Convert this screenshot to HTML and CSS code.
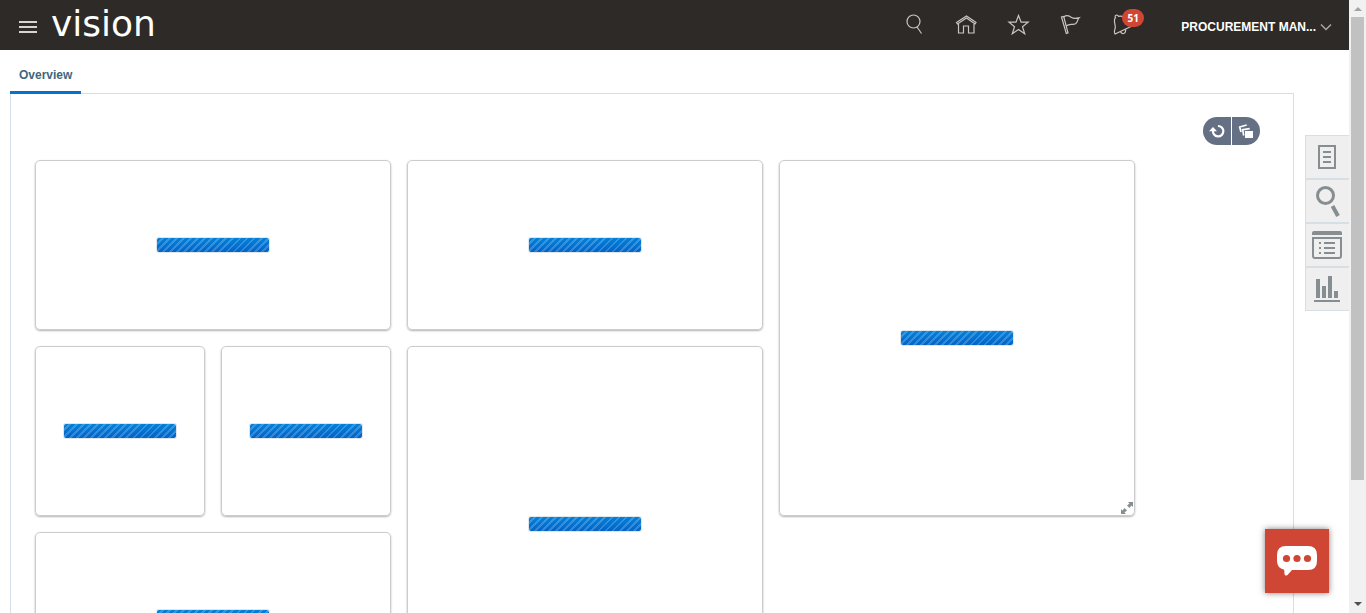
FILE: index.html
```html
<!DOCTYPE html>
<html lang="en">
<head>
<meta charset="utf-8">
<title>Overview</title>
<link rel="stylesheet" href="styles.css">
</head>
<body class="window">
<div class="page">
  <header class="header">
    <button class="menu-button" aria-label="Navigator"><svg width="20" height="14" viewBox="0 0 20 14" fill="#d8d5cf"><path d="M1 1h18v2H1zM1 6h18v2H1zM1 11h18v2H1z"/></svg></button>
    <a class="brand" href="#">vision</a>
    <nav class="header-icons" aria-label="Global">
      <button class="header-icon" aria-label="Search"><svg width="24" height="24" viewBox="0 0 24 24"><circle cx="11.500" cy="9.500" r="6.500"/><path d="M15 15l4.500 6.500"/></svg></button>
      <button class="header-icon" aria-label="Home"><svg width="24" height="24" viewBox="0 0 24 24"><path d="M2.500 10.500L12.500 4l9.500 6.500-1 1.500-8.500-6-9 6z"/><path d="M4.500 12v9h5v-7h5v7h5.500v-9"/></svg></button>
      <button class="header-icon" aria-label="Favorites"><svg width="24" height="24" viewBox="0 0 24 24"><path d="M12.500 3.500l2.600 6.700h7l-5.600 4.500 2.200 7-6.200-4.300-6.200 4.300 2.200-7L3 10.200h7z"/></svg></button>
      <button class="header-icon" aria-label="Watchlist"><svg width="24" height="24" viewBox="0 0 24 24"><path d="M3.500 5l4.800 16.500 1.700-.6L5.700 4.500z"/><path d="M5.700 5C9 2.500 11 3.500 13.500 5.500c2.500 1.500 4.500 1 7.500.3-1.500 1.500-1 4.200-3.500 6-3 1.500-5.500-1-9.500 2.200"/></svg></button>
      <button class="header-icon" aria-label="Notifications, 51 new"><svg width="24" height="24" viewBox="0 0 24 24"><path d="M5.500 5.500C4 3.500 7.300 2 8.500 4.300c4-.8 7 2 8.300 5.400 1 2.400 2 3.400 4.200 4.800l-16 7.500c-2-2 .3-4 .3-7S3 8 5.500 5.500z"/><path d="M10.500 19.500c1 3.500 6 2.500 5-2.300"/></svg><span class="badge">51</span></button>
    </nav>
    <button class="user-button">PROCUREMENT MAN...<svg width="12" height="8" viewBox="0 0 12 8"><path d="M1 1.500l5 5 5-5"/></svg></button>
  </header>

  <nav class="tabs" aria-label="Dashboards"><a class="tab" href="#">Overview</a></nav>

  <div class="body-row">
    <main class="panel">
      <div class="toolbar">
        <button class="tool" aria-label="Refresh"><svg width="16" height="16" viewBox="0 0 16 16"><path d="M4 7.500a5.200 5.200 0 1 0 5-4.500" fill="none" stroke="#fff" stroke-width="2.200"/><path d="M0 8.300L4 4l4 4.300z" fill="#fff"/></svg></button>
        <button class="tool" aria-label="Copy"><svg width="16" height="16" viewBox="0 0 16 16"><path d="M7 8h8v7H7z" fill="#fff"/><path d="M5.700 12.500L4.700 6.700l7-1M3 9L1.700 4l7-2" fill="none" stroke="#fff" stroke-width="1.700"/></svg></button>
      </div>
      <section class="tiles" aria-label="Infotiles">
        <article class="tile wide"><div class="loading" role="progressbar" aria-label="Loading"></div></article>
        <article class="tile wide"><div class="loading" role="progressbar" aria-label="Loading"></div></article>
        <article class="tile wide tall"><div class="loading" role="progressbar" aria-label="Loading"></div>
          <button class="expand" aria-label="Expand"><svg width="12" height="12" viewBox="0 0 12 12" fill="#878e92"><path d="M7 0h5v5l-1.500-1.500L8.500 6 6 3.500l2.500-2zM0 7l1.500 1.500L3.500 6 6 8.500l-2.500 2L5 12H0z"/></svg></button></article>
        <article class="tile"><div class="loading" role="progressbar" aria-label="Loading"></div></article>
        <article class="tile"><div class="loading" role="progressbar" aria-label="Loading"></div></article>
        <article class="tile wide tall"><div class="loading" role="progressbar" aria-label="Loading"></div></article>
        <article class="tile wide"><div class="loading" role="progressbar" aria-label="Loading"></div></article>
      </section>
    </main>
    <aside class="side-tabs" aria-label="Panels">
      <button class="side-tab" aria-label="Tasks"><svg width="32" height="32" viewBox="0 0 32 32"><path d="M8 5h16v22H8z" fill="none" stroke="#878e92" stroke-width="2"/><path d="M12 10h8v2h-8zM12 15h8v2h-8zM12 20h8v2h-8z"/></svg></button>
      <button class="side-tab" aria-label="Search"><svg width="32" height="32" viewBox="0 0 32 32"><circle cx="14.500" cy="10.500" r="8" fill="none" stroke="#878e92" stroke-width="3"/><path d="M21.500 21l5.500 10" stroke="#878e92" stroke-width="4"/></svg></button>
      <button class="side-tab" aria-label="Lists"><svg width="32" height="32" viewBox="0 0 32 32"><path d="M1 4q0-2 2-2h26q2 0 2 2v2H1z"/><path d="M2 9h28v18q0 2-2 2H4q-2 0-2-2z" fill="none" stroke="#878e92" stroke-width="2"/><path d="M8 13h2v2H8zM8 18h2v2H8zM8 23h2v2H8zM13 13h11v2H13zM13 18h11v2H13zM13 23h11v2H13z"/></svg></button>
      <button class="side-tab" aria-label="Reports"><svg width="32" height="32" viewBox="0 0 32 32"><path d="M5 6h4v19H5zM11 13h4v12h-4zM17 3h4v22h-4zM23 18h4v7h-4zM3 27h26v2H3z"/></svg></button>
    </aside>
  </div>
  <button class="chat" aria-label="Chat"><svg width="42" height="32" viewBox="0 0 42 32"><path d="M10 1h22q9 0 9 9v6q0 9-9 9H16l-4.500 5Q9 31.500 8.500 29l-.3-4.200Q1 23 1 16v-6q0-9 9-9z" fill="#fff"/><g fill="#cf4734"><circle cx="10.500" cy="13.500" r="3.600"/><circle cx="21" cy="13.500" r="3.600"/><circle cx="31.500" cy="13.500" r="3.600"/></g></svg></button>
</div>
<div class="scrollbar" aria-hidden="true">
  <svg width="17" height="17" viewBox="0 0 17 17"><path d="M5 11l4-4 4 4z" fill="#a3a3a3"/></svg>
  <div class="scroll-track"><div class="scroll-thumb"></div></div>
  <svg width="17" height="17" viewBox="0 0 17 17"><path d="M5 6l4 4 4-4z" fill="#505050"/></svg>
</div>
</body>
</html>
```
FILE: styles.css
```css
* { box-sizing: border-box; }

button {
  margin: 0;
  padding: 0;
  border: 0;
  background: none;
  font: inherit;
  color: inherit;
  cursor: pointer;
}

svg { display: block; }

.window {
  display: flex;
  height: 100vh;
  margin: 0;
  overflow: hidden;
  background: #fff;
  font: bold 12px/16px "Liberation Sans", Arial, sans-serif;
}

.page {
  position: relative;
  display: flex;
  flex: 1;
  flex-direction: column;
  min-width: 0;
}

.header {
  display: flex;
  flex: none;
  align-items: center;
  height: 50px;
  padding: 0 17px 0 18px;
  background: #2e2a27;
  color: #fff;
}

.menu-button { padding-top: 4px; }

.brand {
  margin: 0 auto 2px 13px;
  color: #fff;
  font: 36px/46px "DejaVu Sans", Verdana, sans-serif;
  text-decoration: none;
}

.header-icons {
  display: flex;
  padding-bottom: 2px;
}

.header-icon {
  position: relative;
  display: flex;
  justify-content: center;
  width: 52px;
}

.header-icon svg {
  fill: none;
  stroke: #c9c6c2;
  stroke-width: 1.2;
}

.badge {
  position: absolute;
  top: -3px;
  left: 26px;
  width: 22px;
  border-radius: 9px;
  background: #cf4734;
  font: bold 10px/18px "Open Sans", sans-serif;
}

.user-button {
  display: flex;
  align-items: center;
  gap: 4px;
  margin-left: 33px;
  padding-top: 4px;
}

.user-button svg {
  fill: none;
  stroke: #aaa7a4;
  stroke-width: 1.5;
}

.tabs {
  display: flex;
  flex: none;
  height: 43px;
  padding-left: 10px;
}

.tab {
  z-index: 1;
  height: 44px;
  padding: 17px 9px 0;
  border-bottom: 3px solid #0572ce;
  color: #41667d;
  text-decoration: none;
}

.body-row {
  display: flex;
  flex: 1;
  gap: 11px;
  min-height: 0;
  padding-left: 10px;
}

.panel {
  flex: 1;
  overflow: hidden;
  padding: 23px 24px 0;
  border: 1px solid #d6dfe6;
  border-bottom: 0;
}

.toolbar {
  display: flex;
  justify-content: flex-end;
  gap: 1px;
  margin: 0 9px 15px 0;
}

.tool {
  display: grid;
  place-items: center;
  width: 28px;
  height: 28px;
  background: #667085;
}

.tool:first-child { border-radius: 14px 0 0 14px; }
.tool:last-child { border-radius: 0 14px 14px 0; }

.tiles {
  display: grid;
  grid-template-columns: repeat(auto-fill, 170px);
  grid-auto-rows: 170px;
  grid-auto-flow: dense;
  gap: 16px;
}

.tile {
  position: relative;
  display: grid;
  place-items: center;
  border: 1px solid #ccc;
  border-radius: 5px;
  box-shadow: 0 1px 2px rgba(0, 0, 0, 0.3);
}

.wide { grid-column: span 2; }
.tall { grid-row: span 2; }

.loading {
  width: 112px;
  height: 14px;
  border-radius: 2px;
  background:
    repeating-linear-gradient(135deg, transparent 0 3px, rgba(255, 255, 255, 0.2) 3px 5px),
    linear-gradient(#0381d9, #0363c8);
  box-shadow: 0 0 0 1px #dfe6ec;
}

.expand {
  position: absolute;
  right: 1px;
  bottom: 1px;
}

.side-tabs {
  display: flex;
  flex-direction: column;
  width: 44px;
  padding-top: 42px;
}

.side-tab {
  display: grid;
  place-items: center;
  height: 44px;
  padding-right: 1px;
  border: solid #d6dfe6;
  border-width: 1px 0 1px 1px;
  background: #efefef;
}

.side-tab svg { fill: #878e92; }

.chat {
  position: absolute;
  right: 20px;
  bottom: 20px;
  display: grid;
  place-items: center;
  width: 64px;
  height: 64px;
  background: #cf4734;
  box-shadow: 0 0 6px rgba(0, 0, 0, 0.5);
}

.scrollbar {
  display: flex;
  flex: none;
  flex-direction: column;
  width: 17px;
  background: #f1f1f1;
}

.scroll-track {
  flex: 1;
  padding: 0 2px;
}

.scroll-thumb {
  height: 80%;
  background: #c1c1c1;
}
```
